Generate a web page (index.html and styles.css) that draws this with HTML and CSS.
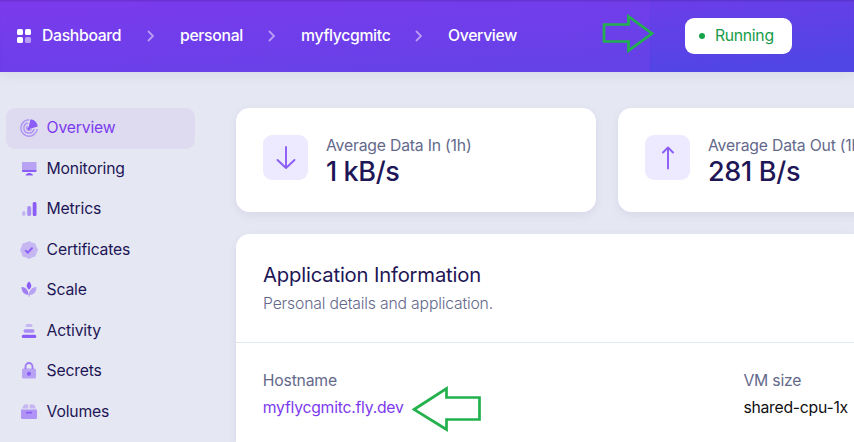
FILE: index.html
```
<!DOCTYPE html>
<html lang="en">
<head>
<meta charset="utf-8">
<title>myflycgmitc · Overview</title>
<link rel="stylesheet" href="styles.css">
</head>
<body>
<header class="topbar">
  <nav class="crumbs">
    <svg class="grid-icon" viewBox="0 0 14 14"><rect width="6" height="6" rx="1.6"/><rect x="8" width="6" height="6" rx="1.6"/><rect y="8" width="6" height="6" rx="1.6"/><rect x="8" y="8" width="6" height="6" rx="1.6" opacity=".5"/></svg>
    <a class="crumb c-dashboard">Dashboard</a>
    <svg class="chevron" viewBox="0 0 8 12"><path d="M1.500 1.500 6 6l-4.500 4.500"/></svg>
    <a class="crumb c-personal">personal</a>
    <svg class="chevron" viewBox="0 0 8 12"><path d="M1.500 1.500 6 6l-4.500 4.500"/></svg>
    <a class="crumb c-app">myflycgmitc</a>
    <svg class="chevron" viewBox="0 0 8 12"><path d="M1.500 1.500 6 6l-4.500 4.500"/></svg>
    <a class="crumb c-overview">Overview</a>
  </nav>
  <div class="status-area"><span class="status"><i class="dot"></i>Running</span></div>
  <svg class="arrow arrow-status" viewBox="0 0 52 40"><path d="M2 10.500H26.500V2.500L50 19.500 26.500 36.500V27.500H2Z"/></svg>
</header>
<div class="layout">
  <aside class="sidebar">
    <a class="item active"><svg viewBox="0 0 18 18"><g fill="none" stroke="currentColor" stroke-width="1.500" opacity=".55"><path d="M9 .8A8.200 8.200 0 1 0 17.200 10"/><path d="M8 4A5.100 5.100 0 1 0 14 10"/><path d="M7.500 7A2.500 2.500 0 1 0 11.500 9.800"/></g><path d="M10.500.2A8.500 8.500 0 0 1 17.700 7.500L10 9.800A1.300 1.300 0 1 1 8.600 8.300Z" fill="currentColor"/></svg>Overview</a>
    <a class="item"><svg viewBox="0 0 18 18"><path d="M2 2h14.500v8H2z" opacity=".5"/><path d="M2 10h14.500v1.200q0 .8-.8.8H2.800Q2 12 2 11.200zM8 13h2.500l2.300 1.600v1H5.700v-1z"/></svg>Monitoring</a>
    <a class="item"><svg viewBox="0 0 18 18"><rect x="2" y="11" width="3.500" height="5" rx="1.700" opacity=".35"/><rect x="7.200" y="6" width="4" height="10" rx="1.800" opacity=".65"/><rect x="12.700" y="2" width="3.800" height="14" rx="1.500"/></svg>Metrics</a>
    <a class="item"><svg viewBox="0 0 18 18"><path d="M9 0l3 1.400 3.200 1.200L16.600 6 18 9l-1.400 3-1.200 3.400-3.400 1.200L9 18l-3-1.400-3.400-1.200L1.400 12 0 9l1.400-3 1.200-3.400L6 1.400Z" opacity=".35"/><path d="m5.300 9.200 2.500 2.500 4.700-5" fill="none" stroke="currentColor" stroke-width="1.900"/></svg>Certificates</a>
    <a class="item"><svg viewBox="0 0 18 18"><path d="M9 .5c1.500 1.500 2.300 3 2.300 4.300S10.500 7.500 9 8.500C7.500 7.500 6.700 6.100 6.700 4.800S7.500 2 9 .5Z"/><path d="M1.500 6c4 0 6.800 2.500 7 7.800C4.500 14 1.500 11 1.500 6Z" opacity=".75"/><path d="M16.500 6c0 4.800-2.500 7.800-6.500 7.800l-.2 1.800H8.500c.2-5.600 3-9.600 8-9.600Z" opacity=".5"/></svg>Scale</a>
    <a class="item"><svg viewBox="0 0 18 18"><rect x="5.500" y="2" width="7" height="3" rx="1.500" opacity=".35"/><rect x="3.500" y="7.200" width="11" height="3.600" rx="1.700" opacity=".65"/><rect x="1.800" y="12.800" width="14.500" height="3.200" rx="1.500"/></svg>Activity</a>
    <a class="item"><svg viewBox="0 0 18 18"><path d="M5.500 7V4.500a3.500 3.500 0 0 1 7 0V7" fill="none" stroke="currentColor" stroke-width="1.800" opacity=".8"/><rect x="2" y="6.500" width="14" height="10" rx="1.500" opacity=".5"/><path d="M9 9.700a2 2 0 1 1 0 4q-1.500 0-2-1Q6.700 10 9 9.700Z"/></svg>Secrets</a>
    <a class="item"><svg viewBox="0 0 18 18"><path d="M4 1.500h4.200v4H2zM9.700 1.500H14l2 4H9.700z" opacity=".35"/><path d="M1 6.500h16v8.300q0 1.200-1.200 1.200H2.200Q1 16 1 14.800Z" opacity=".6"/><rect x="6" y="8.700" width="6" height="1.800" rx=".5"/></svg>Volumes</a>
  </aside>
  <main class="content">
    <section class="stats">
      <article class="card stat">
        <div class="tile"><svg viewBox="0 0 24 24"><path d="M12 1v21M3.500 14l8.500 8 8.500-8"/></svg></div>
        <div><div class="label">Average Data In (1h)</div><div class="value value-in">1 kB/s</div></div>
      </article>
      <article class="card stat">
        <div class="tile"><svg viewBox="0 0 24 24"><path d="M12 22.500V1.500M7 6.500l5-5 5 5"/></svg></div>
        <div><div class="label">Average Data Out (1h)</div><div class="value">281 B/s</div></div>
      </article>
    </section>
    <section class="card info">
      <div class="info-head"><h2>Application Information</h2><p>Personal details and application.</p></div>
      <dl class="details">
        <div class="field"><dt>Hostname</dt><dd class="host">myflycgmitc.fly.dev</dd>
          <svg class="arrow arrow-host" viewBox="0 0 70 46"><path d="M2 23.500 34.500 2.500V11.500H67.500V33.500H34.500V43.500Z"/></svg>
        </div>
        <div class="field"><dt>VM size</dt><dd class="vm">shared-cpu-1x</dd></div>
      </dl>
    </section>
  </main>
</div>
</body>
</html>
```
FILE: styles.css
```
* { box-sizing: border-box; }
html { overflow: hidden; }
body {
  display: flex;
  flex-direction: column;
  margin: 0;
  width: 854px;
  height: 442px;
  overflow: hidden;
  background: #e5e8f2;
  color: #1e1656;
  font: 400 15.75px/22.5px Inter, "Liberation Sans", sans-serif;
  letter-spacing: -.2px;
}
a, span, .label, .value, h2, p, dt, dd { white-space: nowrap; }
.topbar {
  position: relative;
  display: flex;
  flex: none;
  height: 72px;
  background: linear-gradient(176deg, #7c3aed, #5f43e6);
  box-shadow: 0 2px 12px rgba(76, 29, 149, .1), inset 0 2px 2px -1px rgba(49, 20, 120, .3);
}
.crumbs {
  display: flex;
  align-items: center;
  width: 650px;
  padding-left: 17px;
  color: #fff;
  font-weight: 500;
  letter-spacing: -.32px;
}
.grid-icon { width: 14px; height: 14px; margin-right: 11px; fill: #fff; }
.chevron {
  width: 8px;
  height: 12px;
  margin: 0 25px;
  fill: none;
  stroke: #b99cf5;
  stroke-width: 1.8;
  stroke-linecap: round;
}
.c-dashboard { width: 80px; }
.c-personal { width: 63px; }
.c-app { width: 89px; }
.status-area {
  flex: 1;
  padding: 18px 0 0 35px;
  background: linear-gradient(174deg, #6c3de9, #4f46e5 90%);
  box-shadow: inset 0 2px 2px -1px rgba(49, 20, 120, .3);
}
.status {
  display: flex;
  align-items: center;
  width: 107px;
  height: 36px;
  padding-left: 14px;
  border-radius: 9px;
  background: #fff;
  color: #169b48;
  letter-spacing: -.3px;
}
.dot { width: 6px; height: 6px; margin-right: 10px; border-radius: 50%; background: #16a34a; }
.arrow { position: absolute; fill: none; stroke: #22b14c; stroke-width: 2.7; }
.arrow-status { left: 602px; top: 14px; width: 52px; height: 40px; }
.layout {
  display: flex;
  flex: 1;
  gap: 41px;
  min-height: 0;
  padding: 36px 0 0 6px;
}
.sidebar { flex: none; width: 189px; }
.item {
  display: flex;
  align-items: center;
  height: 40.5px;
  padding-left: 14px;
  border-radius: 9px;
}
.item svg { width: 18px; height: 18px; margin-right: 8.6px; color: #8b5cf6; fill: #8b5cf6; }
.item.active { background: #dedaf0; color: #7c3aed; }
.content { display: flex; flex: 1; flex-direction: column; min-width: 0; }
.stats { display: flex; gap: 22px; }
.card {
  border-radius: 13.5px;
  background: #fff;
  box-shadow: 0 3px 9px rgba(76, 29, 149, .08);
}
.stat { display: flex; flex: none; width: 360px; height: 104px; padding: 27px; gap: 18px; }
.tile {
  display: flex;
  align-items: center;
  justify-content: center;
  width: 45px;
  height: 45px;
  border-radius: 9px;
  background: #ede9fe;
}
.tile svg {
  width: 24px;
  height: 24px;
  fill: none;
  stroke: #8b5cf6;
  stroke-width: 1.9;
  stroke-linecap: round;
  stroke-linejoin: round;
}
.label { color: #64698b; line-height: 22px; }
.value { font-size: 27px; font-weight: 500; line-height: 30px; letter-spacing: -.3px; }
.value-in { letter-spacing: -.4px; }
.info { flex: 1; margin-top: 22px; border-radius: 13.5px 0 0 0; }
.info-head { height: 109px; padding: 27px 27px 0; border-bottom: 1px solid #e2e8f0; }
h2 { margin: 0; font-size: 20.25px; font-weight: 400; line-height: 28px; letter-spacing: -.18px; }
p { margin: 4px 0 0; color: #64698b; font-weight: 350; letter-spacing: -.18px; }
.details { display: grid; grid-template-columns: 480.6px 1fr; margin: 0; padding: 27px 0 0 26.8px; }
.field { position: relative; min-width: 0; }
dt { color: #64698b; }
dd { margin: 4.5px 0 0; letter-spacing: -.25px; }
.host { color: #7c3aed; }
.vm { color: #111; }
.arrow-host { left: 149px; top: 16px; width: 70px; height: 46px; }
```
